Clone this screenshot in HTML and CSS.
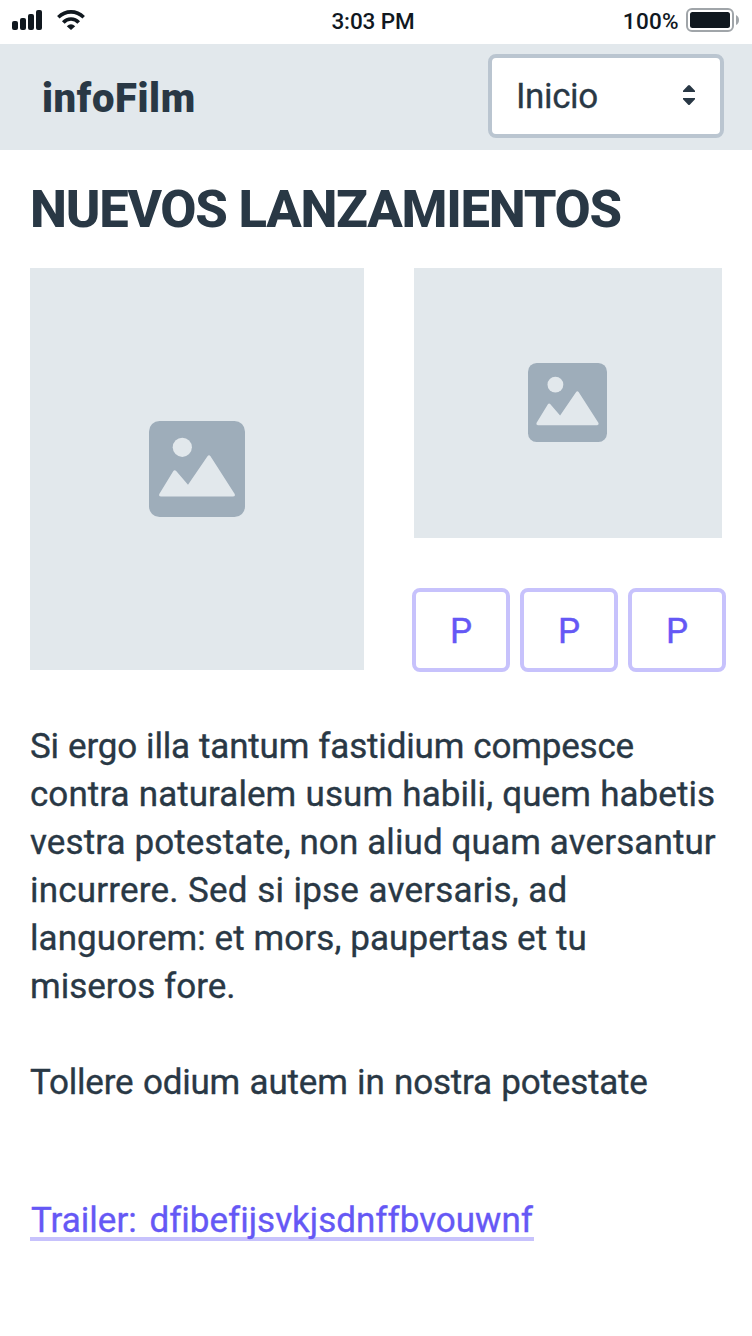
FILE: index.html
```html
<!DOCTYPE html>
<html lang="es">
<head>
<meta charset="utf-8">
<title>infoFilm</title>
<link rel="stylesheet" href="styles.css">
</head>
<body>
<header class="status">
  <div class="signals">
    <svg width="30" height="20" viewBox="0 0 30 20" fill="#10181f"><rect y="11" width="6" height="9" rx="2"/><rect x="8" y="8" width="6" height="12" rx="2"/><rect x="16" y="4" width="6" height="16" rx="2"/><rect x="24" width="6" height="20" rx="2"/></svg>
    <svg width="28" height="20" viewBox="0 0 28 20"><g fill="none" stroke="#10181f" stroke-width="3.6"><path d="M1.3 7.2Q7 1.9 14 1.9T26.7 7.2"/><path d="M6.3 12.5Q9.5 9 14 9T21.7 12.5"/></g><path d="M9.8 16.2Q14 12.4 18.2 16.2L14 20Z" fill="#10181f"/></svg>
  </div>
  <span class="clock">3:03 PM</span>
  <div class="power">
    <span class="percent">100%</span>
    <svg width="54" height="24" viewBox="0 0 54 24"><rect x="1" y="1" width="46" height="22" rx="5" fill="#fff" stroke="#a0a5a9" stroke-width="2"/><rect x="4" y="4" width="40" height="16" rx="2.5" fill="#10181f"/><path d="M50 7Q53 8.500 53 12T50 17Z" fill="#a0a5a9"/></svg>
  </div>
</header>
<nav class="nav">
  <span class="brand">infoFilm</span>
  <div class="select">
    <span class="choice">Inicio</span>
    <svg width="12" height="20" viewBox="0 0 12 20" fill="#293845"><path d="M0 7V5.800L5 .6Q6-.4 7 .6L12 5.800V7ZM0 13V14.200L5 19.400Q6 20.400 7 19.400L12 14.200V13Z"/></svg>
  </div>
</nav>
<main class="main">
  <h1 class="title">NUEVOS LANZAMIENTOS</h1>
  <section class="gallery">
    <div class="poster poster-large">
      <svg width="96" height="96" viewBox="0 0 96 96"><rect width="96" height="96" rx="10.500" fill="#9eadba"/><g fill="#e2e8ec"><circle cx="33.300" cy="26.300" r="9.600"/><path d="M10.300 73L24.200 50.200Q25.500 48.200 27.200 50L39 63.700L58.500 35.300Q60 33.200 61.500 35.300L85.700 73Q86.500 75.500 84 75.500H12Q9.500 75.500 10.300 73Z"/></g></svg>
    </div>
    <div class="side">
      <div class="poster poster-small">
        <svg width="79" height="79" viewBox="0 0 96 96"><rect width="96" height="96" rx="10.500" fill="#9eadba"/><g fill="#e2e8ec"><circle cx="33.300" cy="26.300" r="9.600"/><path d="M10.300 73L24.200 50.200Q25.500 48.200 27.200 50L39 63.700L58.500 35.300Q60 33.200 61.500 35.300L85.700 73Q86.500 75.500 84 75.500H12Q9.500 75.500 10.300 73Z"/></g></svg>
      </div>
      <div class="actions">
        <button class="action">P</button>
        <button class="action">P</button>
        <button class="action">P</button>
      </div>
    </div>
  </section>
  <p class="copy">
    <span class="line l1">Si ergo illa tantum fastidium compesce</span>
    <span class="line l2">contra naturalem usum habili, quem habetis</span>
    <span class="line l3">vestra potestate, non aliud quam aversantur</span>
    <span class="line l4">incurrere. Sed si ipse aversaris, ad</span>
    <span class="line l5">languorem: et mors, paupertas et tu</span>
    <span class="line l6">miseros fore.</span>
  </p>
  <p class="copy">
    <span class="line l7">Tollere odium autem in nostra potestate</span>
  </p>
  <a class="trailer">Trailer: dfibefijsvkjsdnffbvouwnf</a>
</main>
</body>
</html>
```
FILE: styles.css
```css
* { box-sizing: border-box; }
body {
  margin: 0;
  min-height: 1336px;
  background: #fff;
  color: #293845;
  font-family: Roboto, "Liberation Sans", sans-serif;
  font-variant-ligatures: none;
}
svg { display: block; flex: none; }
.status {
  display: grid;
  grid-template-columns: 1fr auto 1fr;
  height: 44px;
  padding: 0 12px 4px 12px;
  align-items: center;
  color: #10181f;
  font-size: 22.500px;
  font-weight: 500;
}
.signals { display: flex; gap: 15px; }
.clock { margin: 1px 6px 0 0; letter-spacing: -.1px; }
.percent { padding-top: 1px; letter-spacing: .3px; }
.power { display: flex; justify-content: flex-end; align-items: center; gap: 7px; }
.nav {
  display: flex;
  justify-content: space-between;
  align-items: flex-start;
  height: 106px;
  padding: 10px 28px 0 42px;
  background: #e2e8ec;
}
.brand { padding-top: 21px; font-size: 40px; font-weight: 900; line-height: 48px; letter-spacing: .6px; }
.select {
  display: flex;
  justify-content: space-between;
  align-items: center;
  width: 236px;
  height: 84px;
  padding: 0 25px 2px 24px;
  border: 4px solid #bac5d0;
  border-radius: 8px;
  background: #fff;
}
.choice { padding-top: 2px; font-size: 35px; letter-spacing: -.4px; -webkit-text-stroke: .3px; }
.main { padding: 28px 26px 0 30px; }
.title { margin: 0; height: 90px; font-size: 52.500px; line-height: 62px; font-weight: 800; letter-spacing: -1.250px; white-space: nowrap; }
.gallery { display: flex; gap: 50px; height: 402px; }
.poster { display: flex; flex: none; align-items: center; justify-content: center; background: #e2e8ec; }
.poster-large { width: 334px; height: 402px; }
.poster-small { width: 308px; height: 270px; padding: 0 2px 1px 0; }
.side { display: flex; flex-direction: column; gap: 50px; }
.actions { display: flex; gap: 10px; margin-left: -2px; }
.action {
  width: 98px;
  height: 84px;
  padding: 2px 0 0 0;
  border: 4px solid #c7c2fc;
  border-radius: 8px;
  background: #fff;
  color: #6558f5;
  font-family: inherit;
  font-size: 35px;
  -webkit-text-stroke: .4px;
}
.copy { margin: 0 0 48px; font-size: 35px; line-height: 48px; -webkit-text-stroke: .35px; }
.gallery + .copy { margin-top: 53px; }
.line { display: block; width: max-content; white-space: nowrap; }
.l1 { letter-spacing: -.18px; word-spacing: .6px; }
.l2 { letter-spacing: .05px; word-spacing: .5px; }
.l3 { letter-spacing: .11px; }
.l4 { letter-spacing: .2px; word-spacing: .5px; }
.l5 { letter-spacing: .08px; }
.l7 { letter-spacing: -.2px; word-spacing: 1px; }
.trailer {
  display: block;
  width: 504px;
  height: 48px;
  margin-top: 86px;
  padding: 5px 0 0 1px;
  border-bottom: 4px solid #c7c2fc;
  color: #6558f5;
  font-size: 35px;
  letter-spacing: 0;
  word-spacing: 4px;
  line-height: 45px;
  white-space: nowrap;
  -webkit-text-stroke: .35px;
}
```
